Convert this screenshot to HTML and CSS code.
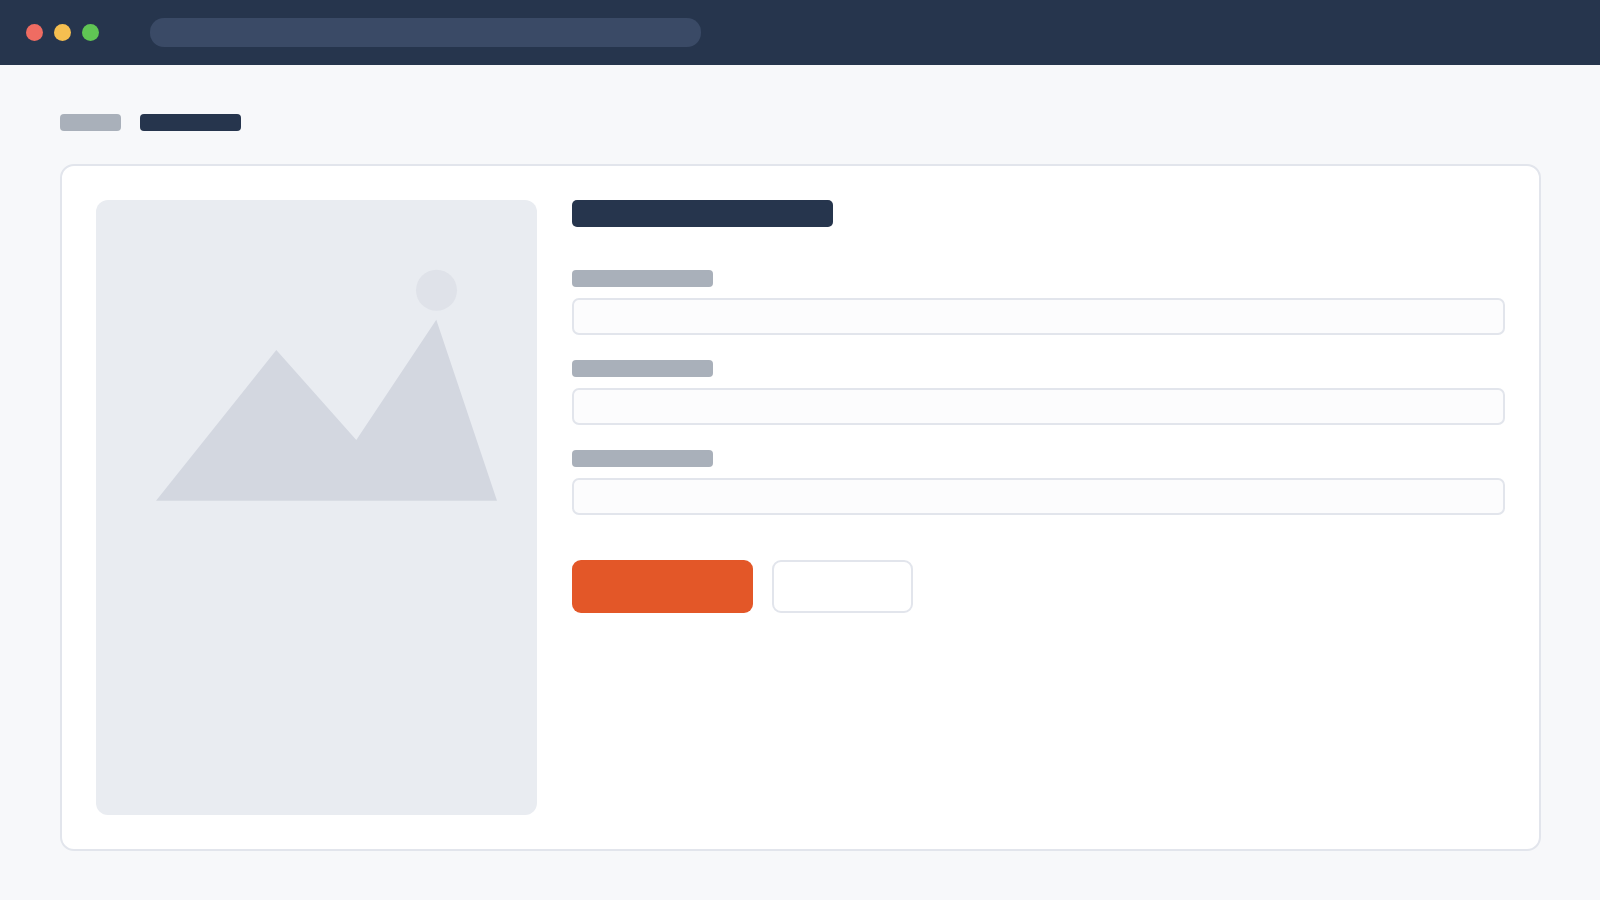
FILE: index.html
```html
<!DOCTYPE html>
<html lang="en">
<head>
  <meta charset="UTF-8" />
  <title>Form mockup</title>
  <link rel="stylesheet" href="styles.css">
</head>
<body>

  <!-- Browser bar -->
  <header class="topbar">
    <div class="dots">
      <span class="dot dot-red"></span>
      <span class="dot dot-yellow"></span>
      <span class="dot dot-green"></span>
    </div>
    <div class="url-bar"></div>
  </header>

  <main class="page">
    <nav class="crumbs">
      <span class="crumb crumb-parent"></span>
      <span class="crumb crumb-current"></span>
    </nav>

    <section class="card">
      <div class="picture">
        <svg class="picture-art" viewBox="0 0 441 615" aria-hidden="true">
          <circle cx="340.5" cy="90.3" r="20.5" fill="#dfe2e9" />
          <polygon points="60,300.7 180.3,150 260.3,240 340.3,119.7 401,300.7" fill="#d3d7e0" />
        </svg>
      </div>

      <form class="form">
        <div class="form-title"></div>

        <div class="field">
          <div class="field-label"></div>
          <div class="field-input"></div>
        </div>
        <div class="field">
          <div class="field-label"></div>
          <div class="field-input"></div>
        </div>
        <div class="field">
          <div class="field-label"></div>
          <div class="field-input"></div>
        </div>

        <div class="actions">
          <div class="btn btn-primary"></div>
          <div class="btn btn-secondary"></div>
        </div>
      </form>
    </section>
  </main>

</body>
</html>
```

FILE: styles.css
```css
* {
  box-sizing: border-box;
}
html, body {
  height: 100%;
}
body {
  margin: 0;
  display: flex;
  flex-direction: column;
  background: #f7f8fa;
  font-family: "Liberation Sans", Arial, sans-serif;
}
.topbar {
  flex: 0 0 65px;
  display: flex;
  align-items: center;
  background: #26354d;
  padding: 0 0 0 26px;
}
.dots {
  display: flex;
  gap: 11px;
}
.dot {
  width: 17px;
  height: 17px;
  border-radius: 50%;
}
.dot-red {
  background: #ef6c62;
}
.dot-yellow {
  background: #f5bf50;
}
.dot-green {
  background: #60c554;
}
.url-bar {
  width: 551px;
  height: 29px;
  margin-left: 51px;
  border-radius: 14px;
  background: #3a4a66;
}
.page {
  flex: 1;
  display: flex;
  flex-direction: column;
  padding: 49px 59px 49px 60px;
}
.crumbs {
  display: flex;
  gap: 19px;
  margin-bottom: 33px;
}
.crumb {
  height: 17px;
  border-radius: 4px;
}
.crumb-parent {
  width: 61px;
  background: #a9b0ba;
}
.crumb-current {
  width: 101px;
  background: #26354d;
}
.card {
  flex: 1;
  display: flex;
  gap: 35px;
  padding: 34px;
  background: #fff;
  border: 2px solid #e2e5ec;
  border-radius: 14px;
}
.picture {
  flex: 0 0 441px;
  background: #e9ecf1;
  border-radius: 12px;
}
.picture-art {
  display: block;
  width: 100%;
  height: 100%;
}
.form {
  flex: 1;
  display: flex;
  flex-direction: column;
  gap: 25px;
}
.form-title {
  width: 261px;
  height: 27px;
  margin-bottom: 18px;
  border-radius: 5px;
  background: #26354d;
}
.field {
  display: flex;
  flex-direction: column;
  gap: 11px;
}
.field-label {
  width: 141px;
  height: 17px;
  border-radius: 4px;
  background: #a9b0ba;
}
.field-input {
  height: 37px;
  background: #fcfcfd;
  border: 2px solid #e2e5ec;
  border-radius: 7px;
}
.actions {
  display: flex;
  gap: 19px;
  margin-top: 20px;
}
.btn {
  height: 53px;
  border-radius: 9px;
}
.btn-primary {
  width: 181px;
  background: #e35728;
}
.btn-secondary {
  width: 141px;
  background: #fff;
  border: 2px solid #e2e5ec;
}
```
